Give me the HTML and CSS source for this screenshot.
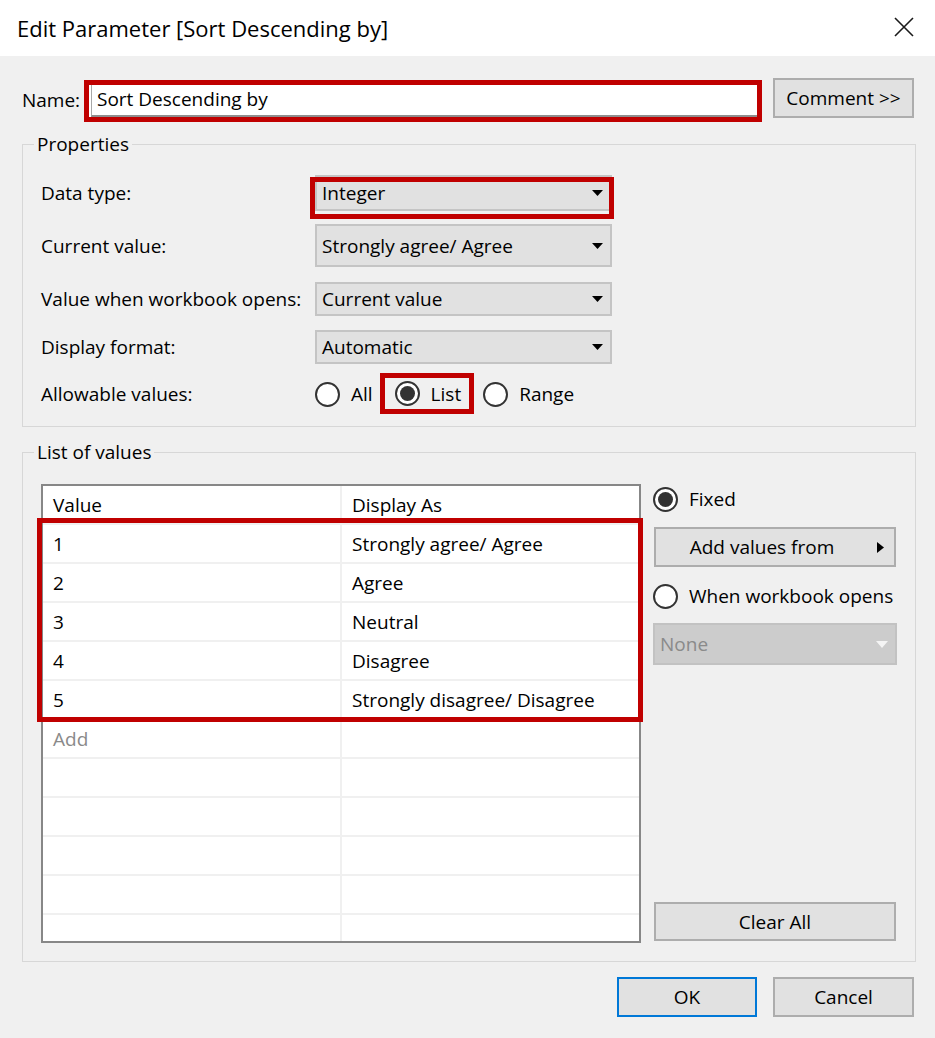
FILE: index.html
```html
<!DOCTYPE html>
<html lang="en">
<head>
<meta charset="utf-8">
<title>Edit Parameter [Sort Descending by]</title>
<link rel="stylesheet" href="styles.css">
</head>
<body>
<div class="dialog">
  <header class="titlebar">
    <h1 class="title">Edit Parameter [Sort Descending by]</h1>
    <button class="close" aria-label="Close">
      <svg width="20" height="20" viewBox="0 0 20 20"><path d="M1 1 L19 19 M19 1 L1 19" stroke="#1a1a1a" stroke-width="1.6" fill="none"/></svg>
    </button>
  </header>

  <main class="body">
    <div class="name-row">
      <label class="name-label">Name:</label>
      <div class="mark name-mark">
        <div class="textbox">Sort Descending by</div>
      </div>
      <button class="btn comment-btn">Comment &gt;&gt;</button>
    </div>

    <fieldset class="group props">
      <legend>Properties</legend>
      <div class="prop-row r1">
        <span class="prop-label">Data type:</span>
        <div class="combo c-short">
          <span>Integer</span>
          <svg class="arrow" width="11" height="6" viewBox="0 0 11 6"><path d="M0 0 H11 L5.5 6 Z" fill="#000"/></svg>
          <div class="overlay-mark datatype-mark"></div>
        </div>
      </div>
      <div class="prop-row r2">
        <span class="prop-label">Current value:</span>
        <div class="combo c-tall">
          <span>Strongly agree/ Agree</span>
          <svg class="arrow" width="11" height="6" viewBox="0 0 11 6"><path d="M0 0 H11 L5.5 6 Z" fill="#000"/></svg>
        </div>
      </div>
      <div class="prop-row r3">
        <span class="prop-label">Value when workbook opens:</span>
        <div class="combo c-mid">
          <span>Current value</span>
          <svg class="arrow" width="11" height="6" viewBox="0 0 11 6"><path d="M0 0 H11 L5.5 6 Z" fill="#000"/></svg>
        </div>
      </div>
      <div class="prop-row r4">
        <span class="prop-label">Display format:</span>
        <div class="combo c-mid">
          <span>Automatic</span>
          <svg class="arrow" width="11" height="6" viewBox="0 0 11 6"><path d="M0 0 H11 L5.5 6 Z" fill="#000"/></svg>
        </div>
      </div>
      <div class="prop-row r5">
        <span class="prop-label">Allowable values:</span>
        <div class="radios">
          <span class="radio-item"><span class="radio"></span>All</span>
          <span class="mark list-mark"><span class="radio-item"><span class="radio checked"></span>List</span></span>
          <span class="radio-item range"><span class="radio"></span>Range</span>
        </div>
      </div>
    </fieldset>

    <fieldset class="group values">
      <legend>List of values</legend>
      <div class="values-inner">
        <div class="table-wrap">
          <div class="table">
            <div class="row head"><div class="cell c1">Value</div><div class="cell c2">Display As</div></div>
            <div class="row"><div class="cell c1">1</div><div class="cell c2">Strongly agree/ Agree</div></div>
            <div class="row"><div class="cell c1">2</div><div class="cell c2">Agree</div></div>
            <div class="row"><div class="cell c1">3</div><div class="cell c2">Neutral</div></div>
            <div class="row"><div class="cell c1">4</div><div class="cell c2">Disagree</div></div>
            <div class="row"><div class="cell c1">5</div><div class="cell c2">Strongly disagree/ Disagree</div></div>
            <div class="row"><div class="cell c1 add">Add</div><div class="cell c2"></div></div>
            <div class="row"><div class="cell c1"></div><div class="cell c2"></div></div>
            <div class="row"><div class="cell c1"></div><div class="cell c2"></div></div>
            <div class="row"><div class="cell c1"></div><div class="cell c2"></div></div>
            <div class="row"><div class="cell c1"></div><div class="cell c2"></div></div>
            <div class="row"><div class="cell c1"></div><div class="cell c2"></div></div>
          </div>
          <div class="overlay-mark rows-mark"></div>
        </div>

        <div class="side">
          <div class="radio-item side-radio"><span class="radio checked"></span>Fixed</div>
          <button class="btn add-btn">Add values from
            <svg class="side-arrow" width="7" height="11" viewBox="0 0 7 11"><path d="M0 0 L7 5.5 L0 11 Z" fill="#000"/></svg>
          </button>
          <div class="radio-item side-radio when"><span class="radio"></span>When workbook opens</div>
          <div class="combo disabled">
            <span>None</span>
            <svg class="arrow" width="12" height="7" viewBox="0 0 12 7"><path d="M0 0 H12 L6 7 Z" fill="#f4f4f4"/></svg>
          </div>
          <button class="btn clear-btn">Clear All</button>
        </div>
      </div>
    </fieldset>

    <div class="footer">
      <button class="btn ok-btn">OK</button>
      <button class="btn cancel-btn">Cancel</button>
    </div>
  </main>
</div>
</body>
</html>
```

FILE: styles.css
```css
* { box-sizing: border-box; }

html, body {
  margin: 0;
  padding: 0;
}

body {
  width: 935px;
  height: 1038px;
  background: #f0f0f0;
  font-family: "Open Sans", "Noto Sans", sans-serif;
  font-size: 19px;
  color: #000;
  overflow: hidden;
}

.dialog {
  width: 935px;
  height: 1038px;
  display: flex;
  flex-direction: column;
}

/* Title bar */
.titlebar {
  height: 56px;
  background: #fff;
  display: flex;
  align-items: center;
  justify-content: space-between;
  padding: 0 21px 0 17px;
}

.title {
  margin: 0;
  font-size: 22px;
  font-weight: 400;
  color: #000;
  line-height: 1;
}

.close {
  border: 0;
  background: transparent;
  padding: 0;
  width: 20px;
  height: 20px;
  display: flex;
  margin-top: -2px;
}

/* Body */
.body {
  flex: 1;
  padding: 22px 21px 0 22px;
  display: flex;
  flex-direction: column;
}

.btn {
  font-family: inherit;
  font-size: 19px;
  color: #000;
  background: #e1e1e1;
  border: 2px solid #adadad;
  padding: 0;
  display: flex;
  align-items: center;
  justify-content: center;
}

/* Name row */
.name-row {
  display: flex;
  align-items: flex-start;
  height: 44px;
}

.name-label {
  width: 62px;
  line-height: 44px;
}

.mark {
  border: 5px solid #c00000;
}

.name-mark {
  margin-top: 2px;
  width: 678px;
  height: 42px;
  padding: 0 0 0 2px;
  background: #fff;
}

.textbox {
  height: 100%;
  background: #fff;
  border-left: 1px solid #a8a8a8;
  border-bottom: 2px solid #8e8e8e;
  padding-left: 5px;
  line-height: 29px;
}

.comment-btn {
  margin-left: 11px;
  width: 141px;
  height: 40px;
}

/* Group boxes */
.group {
  margin: 0;
  padding: 0 18px;
  border: 1px solid #d7d7d7;
  width: 894px;
  min-width: 0;
}

.group legend {
  margin-left: -7px;
  padding: 0 3px;
  line-height: 24px;
  height: 24px;
}

.props {
  margin-top: 10px;
  padding-top: 19px;
  padding-bottom: 18px;
  display: flex;
  flex-direction: column;
}

.prop-row {
  display: flex;
  align-items: center;
}

.prop-label {
  width: 274px;
  flex: none;
}

.r2 { margin-top: 13px; }
.r3 { margin-top: 15px; }
.r4 { margin-top: 14px; }
.r5 { margin-top: 16px; height: 28px; }

.combo {
  position: relative;
  width: 297px;
  background: #e1e1e1;
  border: 2px solid #c4c4c4;
  display: flex;
  align-items: center;
  justify-content: space-between;
  padding: 0 7px 0 5px;
}

.c-short { height: 36px; }
.c-tall { height: 43px; }
.c-mid { height: 34px; }

.combo .arrow { flex: none; }

.overlay-mark {
  position: absolute;
  border: 5px solid #c00000;
  pointer-events: none;
}

.datatype-mark {
  left: -7px;
  top: 0;
  right: -4px;
  bottom: -10px;
}

/* Radios */
.radios {
  display: flex;
  align-items: center;
  height: 28px;
}

.radio-item {
  display: flex;
  align-items: center;
  gap: 11px;
  white-space: nowrap;
}

.radio {
  width: 25px;
  height: 25px;
  border-radius: 50%;
  border: 2px solid #333;
  background: #fff;
  flex: none;
  position: relative;
}

.radio.checked::after {
  content: "";
  position: absolute;
  left: 3px;
  top: 3px;
  width: 15px;
  height: 15px;
  border-radius: 50%;
  background: #333;
}

.list-mark {
  margin: -7px 0 -6px 7px;
  height: 41px;
  padding: 0 8px 0 10px;
  display: flex;
  align-items: center;
}

.range { margin-left: 9px; }

/* List of values */
.values {
  margin-top: 13px;
  padding-top: 20px;
  padding-bottom: 18px;
}

.values-inner {
  display: flex;
  gap: 12px;
}

.table-wrap {
  position: relative;
  width: 600px;
  height: 459px;
  flex: none;
}

.table {
  width: 600px;
  height: 459px;
  background: #fff;
  border: 2px solid #878787;
  overflow: hidden;
}

.row {
  display: flex;
  height: 39px;
  border-bottom: 2px solid #f0f0f0;
}

.cell {
  line-height: 37px;
  padding-top: 1px;
  white-space: nowrap;
}

.c1 {
  width: 299px;
  flex: none;
  border-right: 2px solid #f0f0f0;
  padding-left: 10px;
}

.c2 {
  flex: 1;
  padding-left: 10px;
}

.add { color: #8a8a8a; }

.rows-mark {
  left: -4px;
  top: 34px;
  width: 606px;
  height: 204px;
}

.side {
  width: 244px;
  display: flex;
  flex-direction: column;
}

.side-radio {
  height: 30px;
}

.add-btn {
  position: relative;
  margin: 13px 1px 0 1px;
  height: 40px;
  padding-right: 26px;
}

.side-arrow {
  position: absolute;
  right: 10px;
  top: 13px;
}

.when {
  margin-top: 14px;
}

.combo.disabled {
  width: 244px;
  height: 42px;
  margin-top: 12px;
  background: #cccccc;
  border-color: #c2c2c2;
  color: #8a8a8a;
  padding: 0 7px 0 5px;
}

.clear-btn {
  margin: auto 1px 2px 1px;
  height: 39px;
}

/* Footer */
.footer {
  display: flex;
  justify-content: flex-end;
  gap: 16px;
  margin-top: 15px;
}

.ok-btn {
  width: 140px;
  height: 40px;
  border-color: #0078d7;
}

.cancel-btn {
  width: 141px;
  height: 40px;
}
```
